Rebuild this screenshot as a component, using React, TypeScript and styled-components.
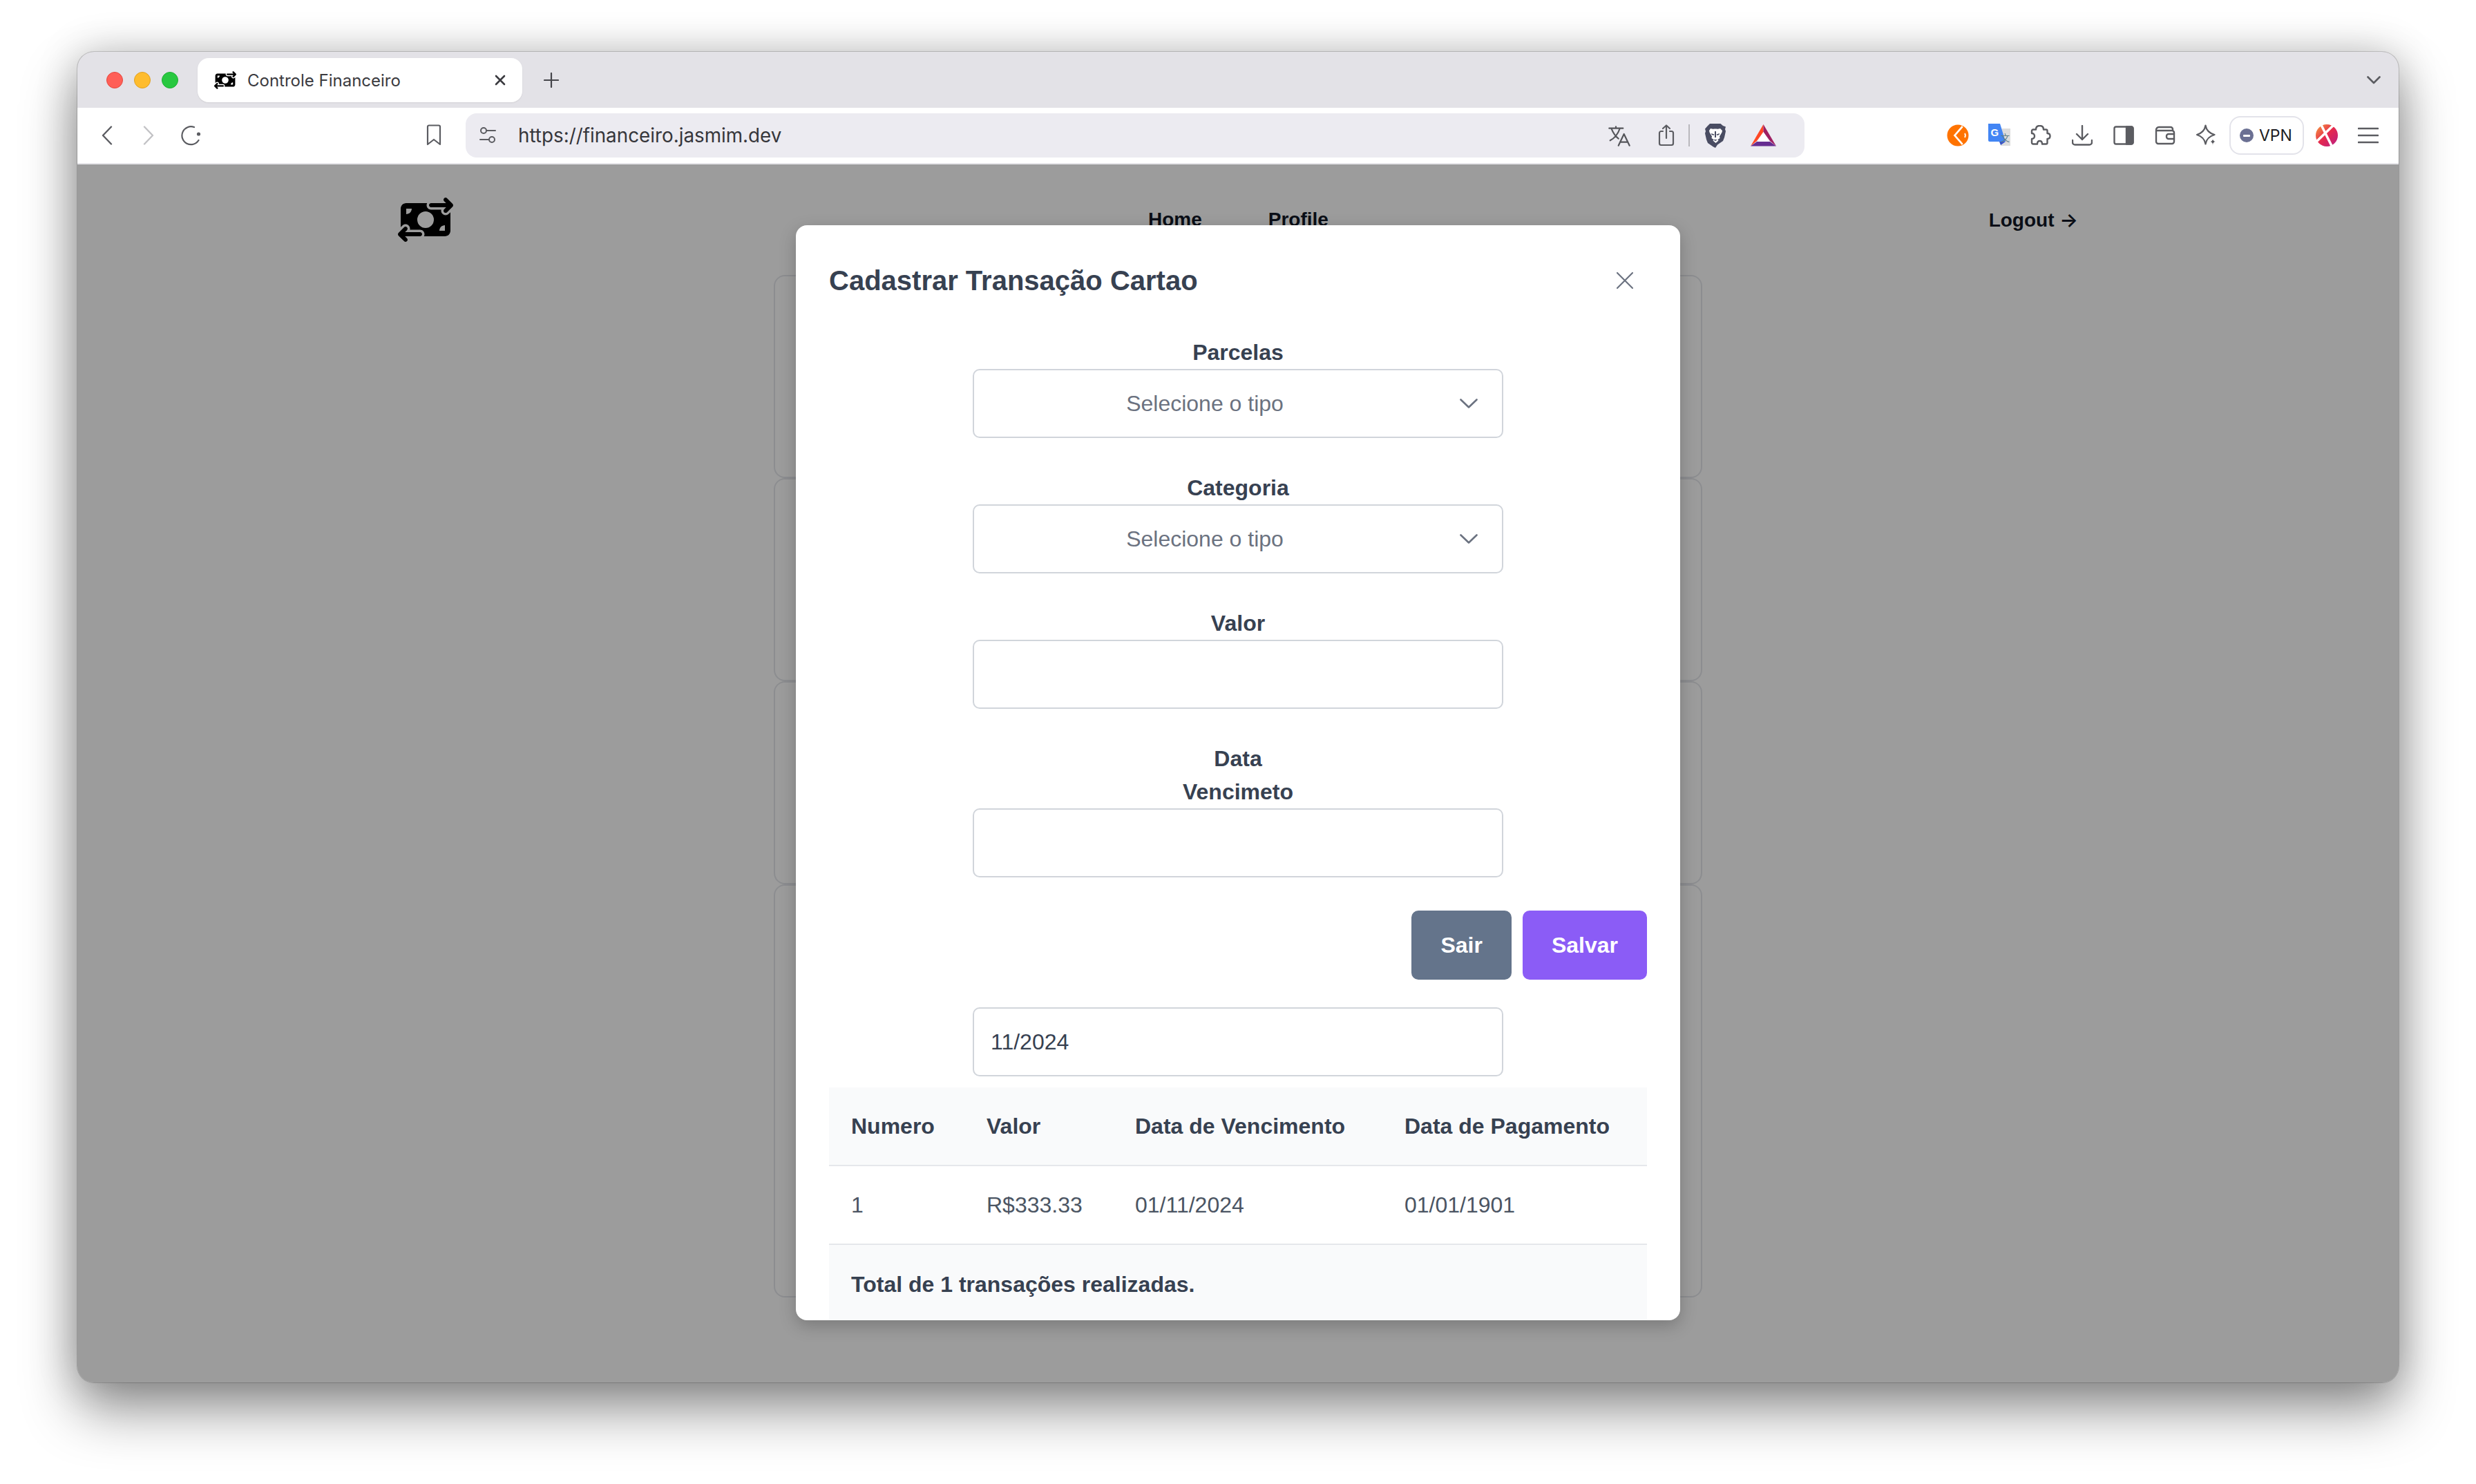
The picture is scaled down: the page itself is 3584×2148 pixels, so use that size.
import React from "react";
import styled, { createGlobalStyle } from "styled-components";
import { FaMoneyBillTransfer } from "react-icons/fa6";

const Global = createGlobalStyle`
  html, body { margin: 0; padding: 0; background: #fff; }
  body { font-family: "Liberation Sans", Arial, sans-serif; overflow: hidden; }
  * { box-sizing: border-box; }
`;

const Stage = styled.div`
  width: 3584px;
  height: 2148px;
  padding: 75px 112px 147px;
  background: #fff;
`;

const Browser = styled.div`
  height: 100%;
  display: flex;
  flex-direction: column;
  border-radius: 24px;
  overflow: hidden;
  background: #999;
  box-shadow: 0 0 0 1px rgba(0, 0, 0, 0.16), 0 40px 80px rgba(0, 0, 0, 0.42), 0 0 60px rgba(0, 0, 0, 0.2);
`;

const TabBar = styled.div`
  height: 81px;
  flex: none;
  display: flex;
  align-items: flex-start;
  padding: 9px 0 0 42px;
  background: #e3e2e7;
`;

const Lights = styled.div`
  display: flex;
  gap: 16px;
  height: 64px;
  align-items: center;
`;

const Light = styled.span<{ $c: string; $b: string }>`
  width: 24px;
  height: 24px;
  border-radius: 50%;
  background: ${(p) => p.$c};
  border: 1px solid ${(p) => p.$b};
`;

const Tab = styled.div`
  width: 470px;
  height: 64px;
  margin-left: 28px;
  display: flex;
  align-items: center;
  padding: 0 24px 0 24px;
  background: #fff;
  border-radius: 16px;
  color: #3b3b40;
  font: 400 24px Inter, sans-serif;
  box-shadow: 0 1px 2px rgba(0, 0, 0, 0.08);
`;

const TabTitle = styled.span`
  flex: 1;
  margin-left: 16px;
`;

const TabGlyph = styled.div`
  height: 64px;
  display: flex;
  align-items: center;
  margin-left: 31px;
`;

const TabListChevron = styled.div`
  margin-left: auto;
  height: 64px;
  padding-right: 26px;
  display: flex;
  align-items: center;
`;

const Toolbar = styled.div`
  height: 82px;
  flex: none;
  display: flex;
  align-items: flex-start;
  padding: 8px 14px 0 13px;
  background: #fff;
  border-bottom: 2px solid #e6e5ea;
`;

const Slot = styled.div<{ $ml?: number; $w?: number }>`
  width: ${(p) => p.$w ?? 60}px;
  height: 64px;
  flex: none;
  display: flex;
  align-items: center;
  justify-content: center;
  margin-left: ${(p) => p.$ml ?? 0}px;
`;

const UrlBar = styled.div`
  width: 1938px;
  height: 64px;
  margin-left: 16px;
  flex: none;
  display: flex;
  align-items: center;
  padding: 0 30px 0 12px;
  background: #ecebf1;
  border-radius: 16px;
`;

const UrlText = styled.span`
  margin-left: 24px;
  flex: 1;
  color: #36363b;
  font: 400 27.8px Inter, sans-serif;
`;

const Divider = styled.span`
  width: 2px;
  height: 32px;
  background: #b9b8bd;
  margin: 0 7px 0 2px;
`;

const RightTools = styled.div`
  margin-left: auto;
  display: flex;
  align-items: flex-start;
`;

const VpnPill = styled.div`
  width: 108px;
  height: 56px;
  margin: 4px 0 0 3px;
  flex: none;
  display: flex;
  align-items: center;
  gap: 8px;
  padding-left: 13px;
  border: 2px solid #e3e3ea;
  border-radius: 16px;
  color: #1c1c22;
  font: 400 23px Inter, sans-serif;
`;

const VpnDot = styled.span`
  width: 20px;
  height: 20px;
  border-radius: 50%;
  background: #6b7093;
  display: flex;
  align-items: center;
  justify-content: center;
  &::after {
    content: "";
    width: 10px;
    height: 3px;
    background: #fff;
    border-radius: 1px;
  }
`;

const Viewport = styled.main`
  flex: 1;
  position: relative;
  overflow: hidden;
  background: #fff;
`;

const PageContainer = styled.div`
  width: 2560px;
  margin: 0 auto;
  padding: 48px 64px 0;
`;

const NavBar = styled.nav`
  display: flex;
  align-items: flex-start;
  height: 64px;
  color: #111827;
  font-size: 28px;
  font-weight: 700;
`;

const Logo = styled.div`
  width: 80px;
  height: 64px;
  display: flex;
  color: #000;
  svg {
    width: 80px;
    height: 64px;
  }
`;

const NavLinks = styled.div`
  display: flex;
  gap: 96px;
  margin-left: 1006px;
  line-height: 64px;
`;

const Logout = styled.div`
  margin-left: auto;
  line-height: 64px;
  white-space: nowrap;
`;

const LogoutArrow = styled.span`
  font-family: Inter, sans-serif;
  font-weight: 600;
  font-size: 28px;
`;

const CardStack = styled.div`
  width: 1344px;
  margin: 48px auto 0;
  display: flex;
  flex-direction: column;
`;

const GhostCard = styled.div<{ $h: number }>`
  height: ${(p) => p.$h}px;
  background: #fff;
  border: 2px solid #e5e7eb;
  border-radius: 16px;
`;

const Scrim = styled.div`
  position: absolute;
  inset: 0;
  background: rgba(0, 0, 0, 0.39);
  display: flex;
  justify-content: center;
  align-items: flex-start;
  padding-top: 88px;
`;

const Modal = styled.div`
  width: 1280px;
  height: 1585px;
  overflow: hidden;
  padding: 0 48px;
  background: #fff;
  border-radius: 16px;
  box-shadow: 0 8px 24px rgba(0, 0, 0, 0.22);
`;

const ModalHead = styled.header`
  height: 160px;
  display: flex;
  justify-content: space-between;
  padding-top: 50px;
`;

const ModalTitle = styled.h2`
  margin: 0;
  font-size: 40px;
  line-height: 60px;
  font-weight: 700;
  color: #374151;
`;

const CloseButton = styled.div`
  width: 52px;
  height: 60px;
  display: flex;
  align-items: center;
  justify-content: center;
  margin-right: 6px;
`;

const Field = styled.div`
  display: flex;
  flex-direction: column;
  align-items: center;
  margin-bottom: 48px;
`;

const FieldLabel = styled.label`
  width: min-content;
  text-align: center;
  font-size: 32px;
  line-height: 48px;
  font-weight: 700;
  color: #374151;
`;

const SelectBox = styled.div`
  width: 768px;
  height: 100px;
  display: flex;
  align-items: center;
  padding-right: 35px;
  border: 2px solid #d1d5db;
  border-radius: 10px;
  background: #fff;
  color: #6b7280;
  font-size: 32px;
`;

const SelectText = styled.span`
  flex: 1;
  text-align: center;
`;

const SelectChevron = styled.svg`
  width: 26px;
  height: 14px;
  margin-left: 35px;
  flex: none;
`;

const TextInput = styled.input`
  display: block;
  width: 768px;
  height: 100px;
  padding: 0 24px;
  border: 2px solid #d1d5db;
  border-radius: 10px;
  outline: none;
  background: #fff;
  color: #374151;
  font: 400 32px "Liberation Sans", Arial, sans-serif;
`;

const Actions = styled.div`
  display: flex;
  justify-content: flex-end;
  gap: 16px;
  margin-bottom: 40px;
`;

const ActionButton = styled.button<{ $bg: string }>`
  height: 100px;
  padding: 0 42px;
  border: 0;
  border-radius: 10px;
  background: ${(p) => p.$bg};
  color: #fff;
  font: 700 32px "Liberation Sans", Arial, sans-serif;
`;

const MonthRow = styled.div`
  display: flex;
  justify-content: center;
  margin-bottom: 16px;
`;

const Table = styled.table`
  width: 1184px;
  table-layout: fixed;
  border-collapse: separate;
  border-spacing: 0;
  font-size: 32px;
  color: #374151;
`;

const Th = styled.th<{ $w: number }>`
  width: ${(p) => p.$w}px;
  height: 114px;
  padding: 0 0 0 32px;
  text-align: left;
  font-weight: 700;
  background: #f9fafb;
  border-bottom: 2px solid #e5e7eb;
  white-space: nowrap;
`;

const Td = styled.td`
  height: 114px;
  padding: 0 0 0 32px;
  border-bottom: 2px solid #e5e7eb;
  color: #4b5563;
  white-space: nowrap;
`;

const FootCell = styled.td`
  height: 114px;
  padding: 0 0 0 32px;
  background: #f9fafb;
  font-weight: 700;
`;

const ICON = "#5b5c61";

const Stroke = ({ w, h, sw = 2.2, c = ICON, children }: { w: number; h: number; sw?: number; c?: string; children: React.ReactNode }) => (
  <svg width={w} height={h} viewBox={`0 0 ${w} ${h}`} fill="none" stroke={c} strokeWidth={sw} strokeLinecap="round" strokeLinejoin="round">
    {children}
  </svg>
);

const Brave = () => (
  <svg width="32" height="36" viewBox="0 0 32 36">
    <path fill="#494c62" d="M8 1h15.5l3.5 3 4 1.5-1 3.5 1 3-2 9-2 5-8 5.5L16 36l-3-1.5-8-5.5-2-5-2-9 1-3-1-3.5L5 4z" />
    <path fill="#fff" d="M9 8c3 1 5 .5 7 .5s4 .5 7-.5l3 3-.5 2.5-3.5 6 .5 2.5-3 2 1 1.5-4 3.5-4-3.5 1-1.5-3-2 .5-2.5-3.5-6-.5-2.5z" />
    <path fill="#494c62" d="M10 15l4.5 1.5-1 1.5-3-1zM22 15l-4.5 1.5 1 1.5 3-1zM15 12h2v9h-2zM13 24h6l-3 2z" />
  </svg>
);

const Bat = () => (
  <svg width="37" height="32" viewBox="0 0 37 32">
    <path fill="#ff4724" d="M18.5 0v11L9 24 0 31.5z" />
    <path fill="#9e1f63" d="M18.5 0L37 31.5 28 24l-9.500-13z" />
    <path fill="#662d91" d="M0 31.500L9 25h19l9 6.500z" />
    <path fill="#fff" d="M18.500 11L27.500 25H9.500z" />
  </svg>
);

const OrangeMark = () => (
  <svg width="32" height="32" viewBox="0 0 32 32">
    <circle cx="16" cy="16" r="15.500" fill="#ff7300" />
    <path d="M25 3L13 16l12 13" fill="none" stroke="#fff" strokeWidth="2.600" transform="translate(-1 0) scale(.95 1)" />
    <path d="M26 13c1.200 2 1.200 4 0 6" fill="none" stroke="#fff" strokeWidth="1.800" />
  </svg>
);

const GoogleTranslate = () => (
  <svg width="34" height="34" viewBox="0 0 34 34">
    <path fill="#dcdcdc" d="M16 7h17v25H19z" />
    <path fill="#4285f4" d="M1 0h17l8 26H3a2 2 0 0 1-2-2z" />
    <path fill="#3a55c8" d="M17 26h9l-7 5z" />
    <text x="4.500" y="18" fill="#fff" fontFamily="'Liberation Sans', sans-serif" fontWeight="700" fontSize="15">G</text>
    <text x="19" y="25" fill="#5f7d85" fontFamily="'Noto Sans CJK SC', sans-serif" fontSize="13">文</text>
  </svg>
);

const XMark = () => (
  <svg width="34" height="34" viewBox="0 0 34 34">
    <defs>
      <linearGradient id="xg" x1="0" y1="0" x2="1" y2="1">
        <stop offset="0" stopColor="#f6a13c" />
        <stop offset=".5" stopColor="#e5294f" />
        <stop offset="1" stopColor="#b81f86" />
      </linearGradient>
    </defs>
    <circle cx="17" cy="17" r="16" fill="url(#xg)" />
    <path d="M8 0L25 34M29 0L1 27" stroke="#fff" strokeWidth="3.500" />
  </svg>
);

const Row = ({ cells }: { cells: string[] }) => (
  <tr>
    {cells.map((c) => (
      <Td key={c}>{c}</Td>
    ))}
  </tr>
);

const Chevron = () => (
  <SelectChevron viewBox="0 0 26 14" fill="none" stroke="#6b7280" strokeWidth="2.600" strokeLinecap="round" strokeLinejoin="round">
    <path d="M1.500 1.500L13 12.500 24.500 1.500" />
  </SelectChevron>
);

export default function App() {
  return (
    <Stage>
      <Global />
      <Browser>
        <TabBar>
          <Lights>
            <Light $c="#ff5f57" $b="#e5483f" />
            <Light $c="#febc2e" $b="#e0a020" />
            <Light $c="#28c840" $b="#1fae33" />
          </Lights>
          <Tab>
            <FaMoneyBillTransfer size={32} color="#000" />
            <TabTitle>Controle Financeiro</TabTitle>
            <Stroke w={16} h={16} sw={2.6} c="#3b3b40">
              <path d="M2 2l12 12M14 2L2 14" />
            </Stroke>
          </Tab>
          <TabGlyph>
            <Stroke w={22} h={22} sw={2.2} c="#45454a">
              <path d="M11 1v20M1 11h20" />
            </Stroke>
          </TabGlyph>
          <TabListChevron>
            <Stroke w={20} h={12} sw={2.6}>
              <path d="M1.500 1.500L10 10l8.500-8.500" />
            </Stroke>
          </TabListChevron>
        </TabBar>

        <Toolbar>
          <Slot>
            <Stroke w={16} h={28} sw={2.4}>
              <path d="M14 1.500L2 14l12 12.500" />
            </Stroke>
          </Slot>
          <Slot>
            <Stroke w={16} h={28} sw={2.4} c="#c2c2c5">
              <path d="M2 1.500L14 14 2 26.500" />
            </Stroke>
          </Slot>
          <Slot $ml={1}>
            <Stroke w={30} h={30} sw={2.2}>
              <path d="M20 3A13 13 0 1 0 26.500 22" />
              <circle cx="26.500" cy="13" r="2.600" fill={ICON} stroke="none" />
            </Stroke>
          </Slot>
          <Slot $ml={292}>
            <Stroke w={24} h={32} sw={2.2}>
              <path d="M3 3.500A2 2 0 0 1 5 1.500h14a2 2 0 0 1 2 2V29l-9-7-9 7z" />
            </Stroke>
          </Slot>
          <UrlBar>
            <Slot $w={40}>
              <Stroke w={26} h={26} sw={2}>
                <circle cx="7" cy="6" r="4" />
                <path d="M11 6h13M2 19h13" />
                <circle cx="19" cy="19" r="4" />
              </Stroke>
            </Slot>
            <UrlText>https://financeiro.jasmim.dev</UrlText>
            <Slot>
              <Stroke w={36} h={36} sw={2.2} c="#55565b">
                <path d="M3.300 7.700h20M13 5.300v2.400M18.700 8C16 16 11 22 4.700 25.300M6.700 8.700c2.200 5.500 5.500 10.500 10 14M16.700 32.700l8-16.700 8 16.700M19.300 27.700H30" />
              </Stroke>
            </Slot>
            <Slot $ml={8}>
              <Stroke w={24} h={32} sw={2.2}>
                <path d="M7 10H4.500A2.500 2.500 0 0 0 2 12.500v15A2.500 2.500 0 0 0 4.500 30h15a2.500 2.500 0 0 0 2.500-2.500v-15A2.500 2.500 0 0 0 19.500 10H17M12 20V1.500M7 6l5-4.500L17 6" />
              </Stroke>
            </Slot>
            <Divider />
            <Slot>
              <Brave />
            </Slot>
            <Slot $ml={9}>
              <Bat />
            </Slot>
          </UrlBar>
          <RightTools>
            <Slot>
              <OrangeMark />
            </Slot>
            <Slot>
              <GoogleTranslate />
            </Slot>
            <Slot>
              <Stroke w={30} h={30} sw={2.4}>
                <path d="M8 6.500C8 3 10 1 13.500 1S19 3 19 6.500h3.500a2 2 0 0 1 2 2V12c2.500 0 4 1.500 4 4s-1.500 4-4 4v5.500a2 2 0 0 1-2 2H17c0-3-1-4.500-3.500-4.500S10 25 10 27.500H4a2 2 0 0 1-2-2V20c2.500 0 4-1.500 4-4s-1.500-4-4-4V8.500a2 2 0 0 1 2-2z" />
              </Stroke>
            </Slot>
            <Slot>
              <Stroke w={30} h={30} sw={2.4}>
                <path d="M15 1v20M7 13l8 8 8-8M1 22v3a3.500 3.500 0 0 0 3.500 3.500h21A3.500 3.500 0 0 0 29 25v-3" />
              </Stroke>
            </Slot>
            <Slot>
              <Stroke w={30} h={28} sw={2.4}>
                <rect x="1.500" y="1.500" width="27" height="25" rx="2.500" />
                <path d="M19 1.500h7a2.500 2.500 0 0 1 2.500 2.500v20a2.500 2.500 0 0 1-2.500 2.500h-7z" fill={ICON} />
              </Stroke>
            </Slot>
            <Slot>
              <Stroke w={30} h={28} sw={2.4}>
                <path d="M2 6.500A4 4 0 0 1 6 2h17a3 3 0 0 1 3 3v2M2 7v16a3 3 0 0 0 3 3h20a3 3 0 0 0 3-3V10a3 3 0 0 0-3-3H4" />
                <path d="M28 12h-8a3 3 0 0 0-3 3v1a3 3 0 0 0 3 3h8" />
              </Stroke>
            </Slot>
            <Slot>
              <svg width="30" height="32" viewBox="0 0 30 32">
                <path d="M13.500 1.500C14.500 8 19 12.800 26.500 15 19 17.200 14.500 21.500 13.500 28.500 12.500 21.500 8 17.200 1 15 8 12.800 12.500 8 13.500 1.500z" fill="none" stroke={ICON} strokeWidth="2.200" strokeLinejoin="round" />
                <path d="M24 20c.7 3 1.500 4 4.500 5-3 .700-3.800 2-4.500 6-.7-4-1.500-5.300-4.500-6 3-.500 3.800-2 4.500-5z" fill={ICON} stroke="#fff" strokeWidth="1" />
              </svg>
            </Slot>
            <VpnPill>
              <VpnDot />
              VPN
            </VpnPill>
            <Slot $ml={3}>
              <XMark />
            </Slot>
            <Slot>
              <Stroke w={30} h={24} sw={2.6}>
                <path d="M1 2h28M1 12h28M1 22h28" />
              </Stroke>
            </Slot>
          </RightTools>
        </Toolbar>

        <Viewport>
          <PageContainer>
            <NavBar>
              <Logo>
                <FaMoneyBillTransfer />
              </Logo>
              <NavLinks>
                <span>Home</span>
                <span>Profile</span>
              </NavLinks>
              <Logout>
                Logout <LogoutArrow>→</LogoutArrow>
              </Logout>
            </NavBar>
            <CardStack>
              <GhostCard $h={294} />
              <GhostCard $h={294} />
              <GhostCard $h={294} />
              <GhostCard $h={598} />
            </CardStack>
          </PageContainer>

          <Scrim>
            <Modal>
              <ModalHead>
                <ModalTitle>Cadastrar Transação Cartao</ModalTitle>
                <CloseButton>
                  <Stroke w={26} h={26} sw={2.2} c="#6b7280">
                    <path d="M2 2l22 22M24 2L2 24" />
                  </Stroke>
                </CloseButton>
              </ModalHead>
              <Field>
                <FieldLabel>Parcelas</FieldLabel>
                <SelectBox>
                  <SelectText>Selecione o tipo</SelectText>
                  <Chevron />
                </SelectBox>
              </Field>
              <Field>
                <FieldLabel>Categoria</FieldLabel>
                <SelectBox>
                  <SelectText>Selecione o tipo</SelectText>
                  <Chevron />
                </SelectBox>
              </Field>
              <Field>
                <FieldLabel>Valor</FieldLabel>
                <TextInput />
              </Field>
              <Field>
                <FieldLabel>Data Vencimeto</FieldLabel>
                <TextInput />
              </Field>
              <Actions>
                <ActionButton $bg="#64748b">Sair</ActionButton>
                <ActionButton $bg="#8b5cf6">Salvar</ActionButton>
              </Actions>
              <MonthRow>
                <TextInput defaultValue="11/2024" />
              </MonthRow>
              <Table>
                <thead>
                  <tr>
                    <Th $w={196}>Numero</Th>
                    <Th $w={215}>Valor</Th>
                    <Th $w={390}>Data de Vencimento</Th>
                    <Th $w={383}>Data de Pagamento</Th>
                  </tr>
                </thead>
                <tbody>
                  <Row cells={["1", "R$333.33", "01/11/2024", "01/01/1901"]} />
                </tbody>
                <tfoot>
                  <tr>
                    <FootCell colSpan={4}>Total de 1 transações realizadas.</FootCell>
                  </tr>
                </tfoot>
              </Table>
            </Modal>
          </Scrim>
        </Viewport>
      </Browser>
    </Stage>
  );
}
